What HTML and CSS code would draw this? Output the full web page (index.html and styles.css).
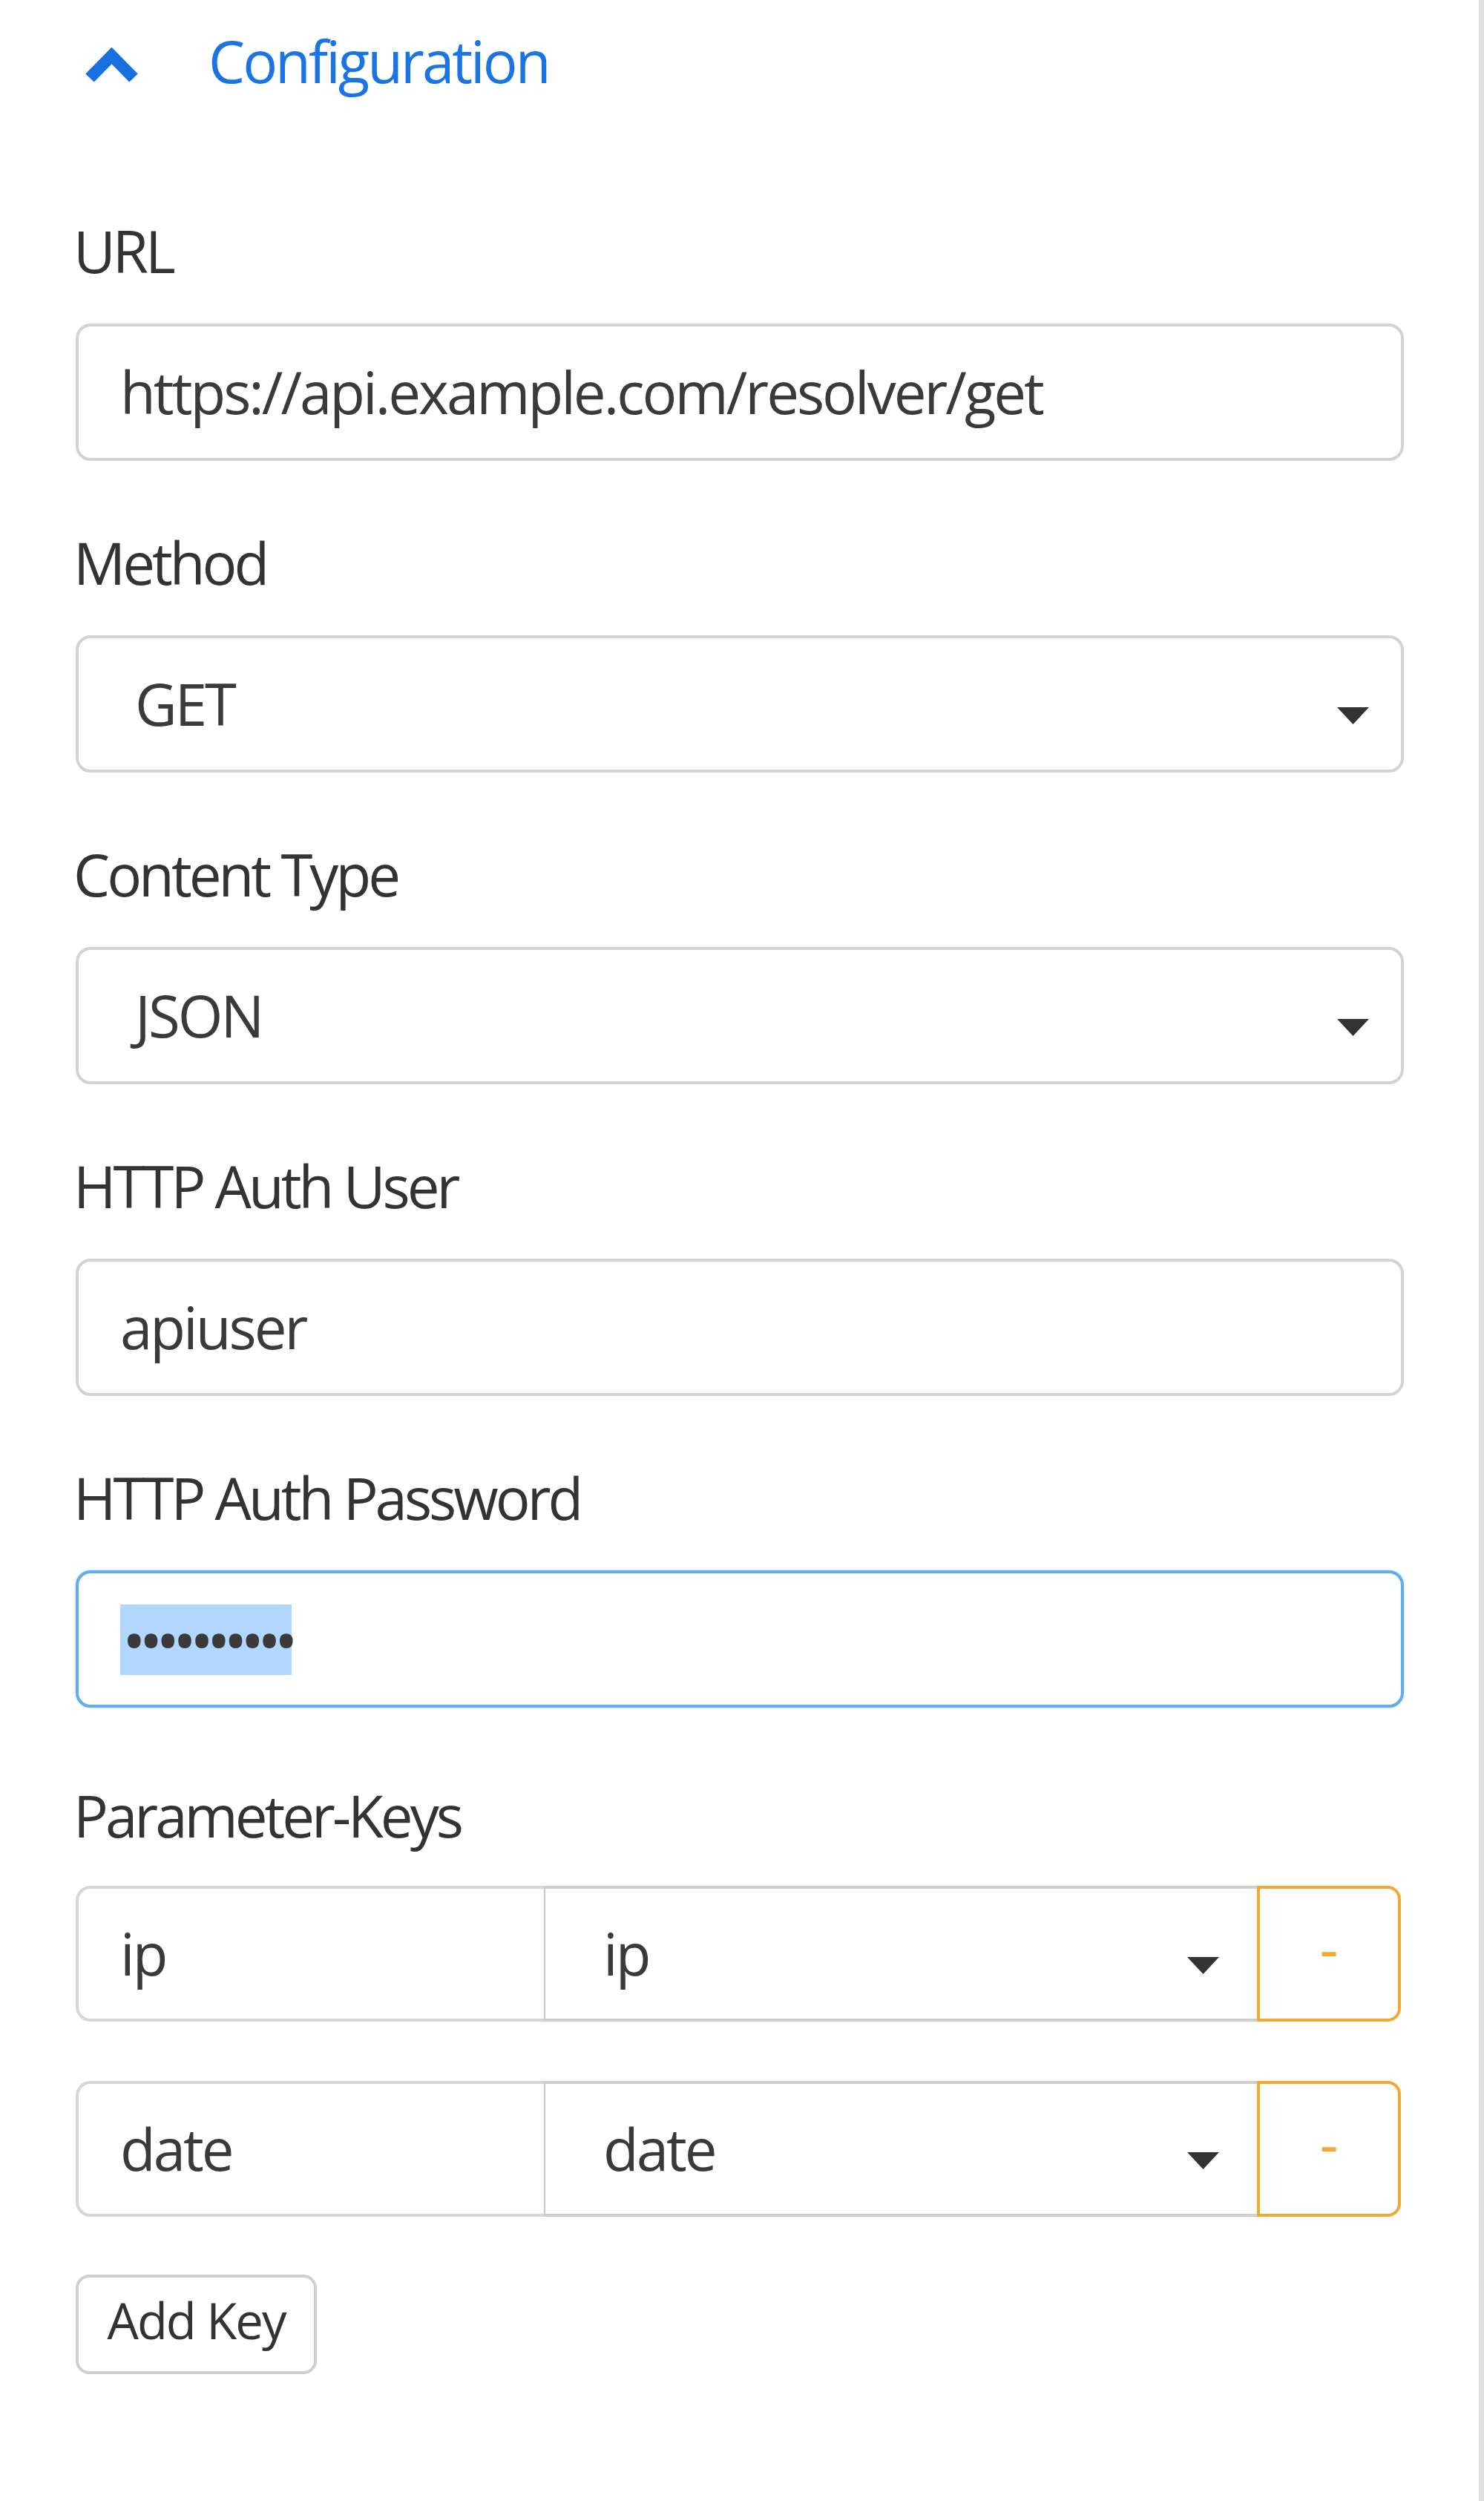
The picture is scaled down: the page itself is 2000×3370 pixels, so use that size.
FILE: index.html
```html
<!DOCTYPE html>
<html lang="en">
<head>
<meta charset="utf-8">
<title>Configuration</title>
<link rel="stylesheet" href="styles.css">
</head>
<body>
<div class="panel">
  <div class="header">
    <svg class="chev" viewBox="0 0 77 50" aria-hidden="true">
      <polyline points="9,41 38.5,11 68,41" fill="none" stroke="#1670e0" stroke-width="16" stroke-linejoin="miter" stroke-linecap="butt"/>
    </svg>
    <span class="header-title">Configuration</span>
  </div>

  <div class="form">
    <div class="group">
      <div class="label">URL</div>
      <div class="field">https://api.example.com/resolver/get</div>
    </div>

    <div class="group">
      <div class="label">Method</div>
      <div class="field select"><span class="value">GET</span><svg class="caret" viewBox="0 0 43 23" aria-hidden="true"><polygon points="0,0 43,0 21.5,23" fill="#333"/></svg></div>
    </div>

    <div class="group">
      <div class="label">Content Type</div>
      <div class="field select"><span class="value">JSON</span><svg class="caret" viewBox="0 0 43 23" aria-hidden="true"><polygon points="0,0 43,0 21.5,23" fill="#333"/></svg></div>
    </div>

    <div class="group">
      <div class="label">HTTP Auth User</div>
      <div class="field">apiuser</div>
    </div>

    <div class="group group-last">
      <div class="label">HTTP Auth Password</div>
      <div class="field focus"><span class="selected">••••••••••</span></div>
    </div>

    <div class="group params">
      <div class="label label-params">Parameter-Keys</div>
      <div class="param-row">
        <div class="key-cell">ip</div>
        <div class="val-cell"><span class="value">ip</span><svg class="caret" viewBox="0 0 43 23" aria-hidden="true"><polygon points="0,0 43,0 21.5,23" fill="#333"/></svg></div>
        <div class="remove-btn">-</div>
      </div>
      <div class="param-row">
        <div class="key-cell">date</div>
        <div class="val-cell"><span class="value">date</span><svg class="caret" viewBox="0 0 43 23" aria-hidden="true"><polygon points="0,0 43,0 21.5,23" fill="#333"/></svg></div>
        <div class="remove-btn">-</div>
      </div>
      <div class="add-btn">Add Key</div>
    </div>
  </div>
</div>
</body>
</html>
```

FILE: styles.css
```css
html, body {
  margin: 0;
  padding: 0;
  background: #ffffff;
}

body {
  font-family: "Open Sans", "Noto Sans", sans-serif;
  color: #333333;
}

.panel {
  width: 2000px;
  min-height: 3370px;
  box-sizing: border-box;
  border-right: 7px solid #e1e1e1;
  padding: 32px 0 0 102px;
}

.header {
  display: flex;
  align-items: center;
  height: 100px;
}

.chev {
  width: 77px;
  height: 50px;
  margin-left: 10px;
  margin-right: 92px;
  margin-top: 14px;
  flex: none;
}

.header-title {
  font-size: 78px;
  line-height: 100px;
  letter-spacing: -3px;
  color: #1a74e4;
}

.form {
  width: 1790px;
  margin-top: 156px;
}

.group {
  margin-bottom: 87px;
}

.group-last {
  margin-bottom: 95px;
}

.label {
  height: 100px;
  margin-left: -3px;
  font-size: 78px;
  line-height: 100px;
  letter-spacing: -4px;
  color: #333333;
  margin-bottom: 48px;
  white-space: nowrap;
}

.label-params {
  margin-bottom: 45px;
}

.field {
  height: 185px;
  box-sizing: border-box;
  border: 4px solid #d3d3d3;
  border-radius: 20px;
  padding: 0 56px;
  font-size: 78px;
  line-height: 177px;
  letter-spacing: -3px;
  color: #3a3a3a;
  white-space: nowrap;
  background: #fff;
}

.select {
  display: flex;
  align-items: center;
  justify-content: space-between;
  padding-left: 76px;
  padding-right: 43px;
}

.caret {
  width: 43px;
  height: 23px;
  flex: none;
  margin-top: 32px;
}

.focus {
  border-color: #62adec;
  box-shadow: 0 0 3px rgba(98, 173, 236, 0.55);
  padding-left: 56px;
  display: flex;
  align-items: center;
}

.selected {
  display: inline-block;
  height: 95px;
  margin-top: 2px;
  padding: 0 0 0 3px;
  background: #b2d6fd;
  font-size: 84px;
  line-height: 95px;
  letter-spacing: -8.8px;
  color: #3a3a3a;
}

.param-row {
  display: flex;
  width: 1786px;
  height: 183px;
  margin-bottom: 80px;
  font-size: 78px;
  letter-spacing: -3px;
  color: #3a3a3a;
}

.key-cell {
  width: 631px;
  box-sizing: border-box;
  border: 4px solid #d6d6d6;
  border-right: 0;
  border-radius: 20px 0 0 20px;
  padding-left: 56px;
  line-height: 175px;
  flex: none;
}

.val-cell {
  width: 961px;
  box-sizing: border-box;
  border: 4px solid #cdcdcd;
  border-left: 2px solid #c8c8c8;
  border-right: 0;
  padding: 0 51px 0 78px;
  display: flex;
  align-items: center;
  justify-content: space-between;
  line-height: 175px;
  flex: none;
}

.remove-btn {
  width: 194px;
  box-sizing: border-box;
  border: 4px solid #f5a733;
  border-radius: 0 18px 18px 0;
  color: #f5a733;
  text-align: center;
  line-height: 158px;
  letter-spacing: 0;
  flex: none;
}

.add-btn {
  width: 325px;
  height: 134px;
  box-sizing: border-box;
  margin-top: -2px;
  border: 4px solid #cfcfcf;
  border-radius: 18px;
  font-size: 67px;
  letter-spacing: -2px;
  color: #333333;
  display: flex;
  align-items: center;
  justify-content: center;
  padding-bottom: 12px;
}
```
